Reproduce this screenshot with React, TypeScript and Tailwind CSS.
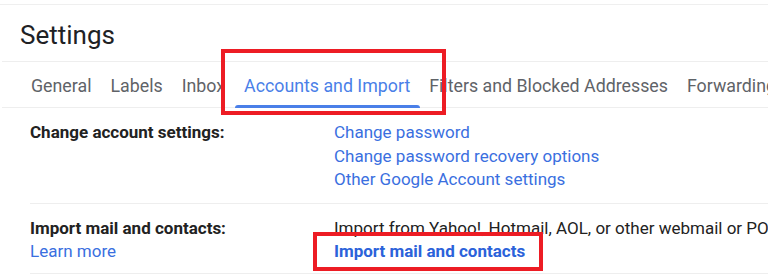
import React from "react";

const tabs = [
  "General",
  "Labels",
  "Inbox",
  "Accounts and Import",
  "Filters and Blocked Addresses",
  "Forwarding and POP/IMAP",
];

const ACTIVE = "Accounts and Import";

export default function App() {
  return (
    <div
      className="relative h-[280px] w-[768px] overflow-hidden bg-white text-[#202124]"
      style={{ fontFamily: "Roboto, 'Liberation Sans', Arial, sans-serif" }}
    >
      <div className="mt-1 border-t border-[#efefef]" />

      {/* header */}
      <div className="px-[20px] pt-[15px] pb-[11px]">
        <h1 className="text-[26px] leading-[30px] font-normal text-[#202124]">
          Settings
        </h1>
      </div>

      {/* tabs */}
      <div className="ml-[2px] flex h-[47px] items-center whitespace-nowrap border-y border-[#eeeeee] pl-[19.5px]">
        {tabs.map((t) => {
          const active = t === ACTIVE;
          return (
            <div
              key={t}
              className={`relative flex h-full items-center px-[9.5px] pt-[4px] text-[17.8px] ${
                active ? "text-[#4a7fe8]" : "text-[#5f6368]"
              }`}
            >
              {t}
              {active && (
                <span className="absolute right-0 -bottom-px left-0 h-[3px] rounded-t-sm bg-[#4a7fe8]" />
              )}
            </div>
          );
        })}
      </div>

      {/* settings rows */}
      <div className="pl-[30px] text-[17px] leading-[23.5px]">
        <div className="flex border-b border-[#eeeeee] pt-[13px] pb-[11px]">
          <div className="w-[304px] shrink-0 font-bold text-[#222222]">
            Change account settings:
          </div>
          <div className="flex flex-col text-[#3a6fdf]">
            <a>Change password</a>
            <a>Change password recovery options</a>
            <a>Other Google Account settings</a>
          </div>
        </div>

        <div className="flex border-b border-[#eeeeee] pt-[13px] pb-[9px]">
          <div className="flex w-[304px] shrink-0 flex-col">
            <span className="font-bold text-[#222222]">
              Import mail and contacts:
            </span>
            <a className="text-[#3a6fdf]">Learn more</a>
          </div>
          <div className="flex flex-col whitespace-nowrap">
            <span className="text-[#222222]">
              Import from Yahoo!, Hotmail, AOL, or other webmail or POP3
              accounts.
            </span>
            <a className="font-bold text-[#2b62da]">Import mail and contacts</a>
          </div>
        </div>
      </div>

      {/* red highlight boxes */}
      <div className="pointer-events-none absolute top-[49px] left-[221px] h-[66px] w-[225px] border-4 border-[#ed1c24]" />
      <div className="pointer-events-none absolute top-[232px] left-[313px] h-[39px] w-[230px] border-4 border-[#ed1c24]" />
    </div>
  );
}
